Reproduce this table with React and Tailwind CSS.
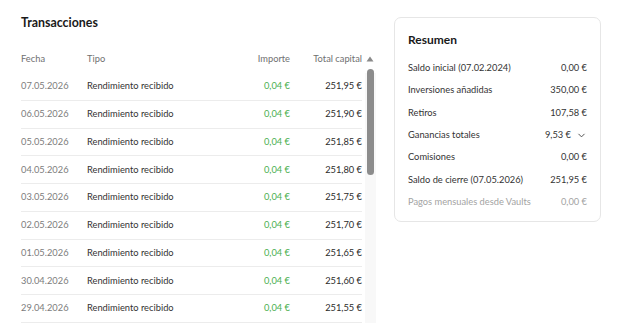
import React from 'react';
import { ChevronDown } from 'lucide-react';

export default function App() {
  const rows = [
    { date: '07.05.2026', total: '251,95 €' },
    { date: '06.05.2026', total: '251,90 €' },
    { date: '05.05.2026', total: '251,85 €' },
    { date: '04.05.2026', total: '251,80 €' },
    { date: '03.05.2026', total: '251,75 €' },
    { date: '02.05.2026', total: '251,70 €' },
    { date: '01.05.2026', total: '251,65 €' },
    { date: '30.04.2026', total: '251,60 €' },
    { date: '29.04.2026', total: '251,55 €' },
  ];

  const summary = [
    { label: 'Saldo inicial (07.02.2024)', value: '0,00 €' },
    { label: 'Inversiones añadidas', value: '350,00 €' },
    { label: 'Retiros', value: '107,58 €' },
    { label: 'Ganancias totales', value: '9,53 €', toggle: true },
    { label: 'Comisiones', value: '0,00 €' },
    { label: 'Saldo de cierre (07.05.2026)', value: '251,95 €' },
    { label: 'Pagos mensuales desde Vaults', value: '0,00 €', muted: true },
  ];

  return (
    <div className="w-[625px] h-[323px] overflow-hidden bg-white flex pl-[21px] font-['Lato','Liberation_Sans',sans-serif] text-[#333]">
      {/* Transactions */}
      <div className="w-[357px] pt-[14px]">
        <h2 className="text-[12.4px] font-bold leading-[18px] text-[#1a1a1a]">Transacciones</h2>
        <div className="flex mt-[12px]">
          <div className="w-[341px] text-[9.3px]">
            <div className="flex items-center h-[29px] text-[#707070]">
              <span className="w-[66px]">Fecha</span>
              <span className="flex-1">Tipo</span>
              <span className="w-[60px] text-right">Importe</span>
              <span className="w-[72px] text-right">Total capital</span>
            </div>
            {rows.map((r) => (
              <div key={r.date} className="flex items-center h-[27.75px] border-b border-[#ececec]">
                <span className="w-[66px] text-[#7c7c7c]">{r.date}</span>
                <span className="flex-1 text-[#333]">Rendimiento recibido</span>
                <span className="w-[60px] text-right text-[#4caf50]">0,04 €</span>
                <span className="w-[72px] text-right text-[#2b2b2b]">{r.total}</span>
              </div>
            ))}
          </div>
          {/* Scrollbar */}
          <div className="w-[16px] flex flex-col items-center">
            <div className="h-[29px] flex items-center justify-center">
              <svg width="8" height="6" viewBox="0 0 8 6">
                <path d="M4 0.5 L7.5 5.5 L0.5 5.5 Z" fill="#8a8a8a" />
              </svg>
            </div>
            <div className="w-[11px] flex-1 bg-[#f8f8f8] flex justify-center">
              <div className="w-[7px] h-[106px] rounded-full bg-[#8c8c8c] -mt-[4px]" />
            </div>
          </div>
        </div>
      </div>

      {/* Summary */}
      <div className="ml-[16px] mt-[17px] w-[207px] h-[205px] border border-[#e6e6e6] rounded-[7px] px-[13px] pt-[14px] text-[9.3px]">
        <h3 className="text-[12px] font-bold leading-[16px] text-[#1a1a1a]">Resumen</h3>
        <div className="mt-[9px]">
          {summary.map((s) => (
            <div key={s.label} className={`flex items-center justify-between h-[22.3px] ${s.muted ? 'text-[#a3a3a3]' : 'text-[#333]'}`}>
              <span>{s.label}</span>
              {s.toggle ? (
                <span className="flex items-center gap-[5px]">
                  {s.value}
                  <ChevronDown size={11} strokeWidth={2} className="text-[#444]" />
                </span>
              ) : (
                <span>{s.value}</span>
              )}
            </div>
          ))}
        </div>
      </div>
    </div>
  );
}
